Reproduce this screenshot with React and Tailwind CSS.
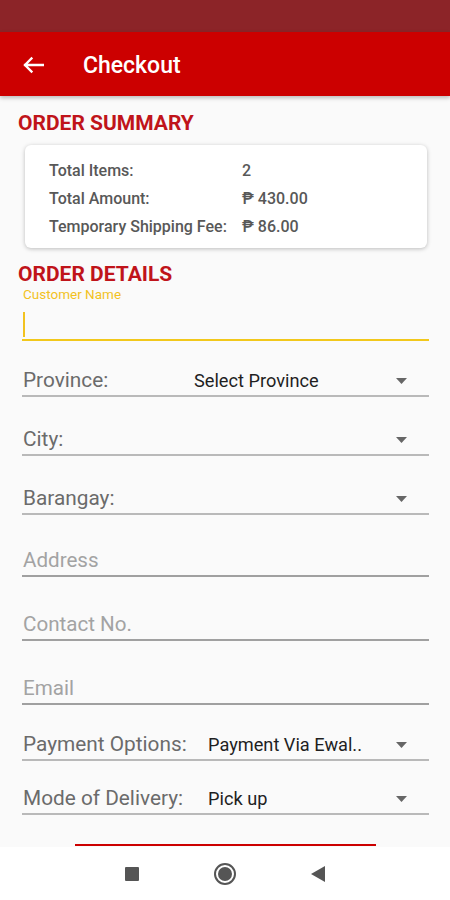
import React from 'react';

const font = { fontFamily: 'Roboto, "Noto Sans", sans-serif' };

const summary = [
  { label: 'Total Items:', value: '2' },
  { label: 'Total Amount:', value: '₱ 430.00' },
  { label: 'Temporary Shipping Fee:', value: '₱ 86.00' },
];

const Caret = () => (
  <svg width="11" height="6" viewBox="0 0 11 6" className="shrink-0">
    <path d="M0 0h11L5.5 6z" fill="#666" />
  </svg>
);

const SelectRow = ({ label, value, labelWidth, mt }) => (
  <div className={mt}>
    <div className="h-[32px] flex items-center pt-[3px] pl-[1px] pr-[22px]">
      <span className="text-[20.8px] text-[#6b6b6b] shrink-0" style={{ width: labelWidth }}>{label}</span>
      {value && <span className="text-[18.2px] text-[#1f1f1f] truncate">{value}</span>}
      <span className="ml-auto"><Caret /></span>
    </div>
    <div className="h-[2px] bg-[#b9b9b9]" />
  </div>
);

const TextRow = ({ placeholder, mt }) => (
  <div className={mt}>
    <div className="h-[32px] flex items-center pt-[2px] pl-[1px]">
      <span className="text-[20.6px] text-[#a3a3a3]">{placeholder}</span>
    </div>
    <div className="h-[2px] bg-[#a0a0a0]" />
  </div>
);

const App = () => {
  return (
    <div className="w-[450px] h-[900px] flex flex-col bg-[#fafafa] overflow-hidden" style={font}>
      <div className="h-[32px] bg-[#8c2428] shrink-0" />
      <header className="h-[64px] bg-[#cc0000] shrink-0 flex items-center shadow-[0_2px_4px_rgba(0,0,0,0.25)] relative z-10">
        <svg width="22" height="18" viewBox="0 0 22 18" className="ml-[22px] mt-[1px]">
          <path d="M21 9H3M9.5 2.5L3 9l6.5 6.5" stroke="#fff" strokeWidth="2.3" fill="none" strokeLinecap="square" />
        </svg>
        <h1 className="ml-[39px] pt-[4px] text-[23px] font-medium text-white">Checkout</h1>
      </header>

      <main className="flex-1 overflow-hidden">
        <h2 className="pt-[16px] pl-[18px] text-[21px] leading-[22px] font-bold text-[#c0141a]">ORDER SUMMARY</h2>

        <div className="mt-[11px] ml-[25px] mr-[23px] bg-white rounded-[6px] shadow-[0_1px_4px_rgba(0,0,0,0.25)] pt-[12px] pb-[7px] pl-[24px]">
          {summary.map((row) => (
            <div key={row.label} className="flex h-[28px] items-center text-[16px] font-medium text-[#585858]">
              <span className="w-[193px] shrink-0">{row.label}</span>
              <span>{row.value}</span>
            </div>
          ))}
        </div>

        <h2 className="mt-[15px] pl-[18px] text-[21px] leading-[22px] font-bold text-[#c0141a]">ORDER DETAILS</h2>

        <div className="pl-[22px] pr-[21px]">
          <p className="mt-[2px] pl-[1px] text-[13.5px] leading-[14px] text-[#f2c21f]">Customer Name</p>
          <div className="h-[38px] flex items-center pl-[1px]">
            <span className="w-[2px] h-[25px] bg-[#f2c21f] mt-[8px]" />
          </div>
          <div className="h-[2px] bg-[#f2c81b]" />

          <SelectRow mt="mt-[22px]" label="Province:" value="Select Province" labelWidth={171} />
          <SelectRow mt="mt-[25px]" label="City:" />
          <SelectRow mt="mt-[25px]" label="Barangay:" />
          <TextRow mt="mt-[28px]" placeholder="Address" />
          <TextRow mt="mt-[30px]" placeholder="Contact No." />
          <TextRow mt="mt-[30px]" placeholder="Email" />
          <SelectRow mt="mt-[22px]" label="Payment Options:" value="Payment Via Ewal.." labelWidth={185} />
          <SelectRow mt="mt-[20px]" label="Mode of Delivery:" value="Pick up" labelWidth={185} />
        </div>

        {/* place order button, only its top edge shows above the nav bar */}
        <div className="mt-[29px] ml-[75px] w-[301px] h-[44px] border-t-[2px] border-[#cc0000]" />
      </main>

      <nav className="h-[53px] bg-white shrink-0 flex items-center justify-center gap-[75px]">
        <span className="w-[14px] h-[14px] bg-[#555] rounded-[1px]" />
        <span className="w-[22px] h-[22px] rounded-full border-[2px] border-[#555] flex items-center justify-center">
          <span className="w-[14px] h-[14px] rounded-full bg-[#555]" />
        </span>
        <svg width="14" height="16" viewBox="0 0 14 16">
          <path d="M14 0v16L0 8z" fill="#555" />
        </svg>
      </nav>
    </div>
  );
};

export default App;
